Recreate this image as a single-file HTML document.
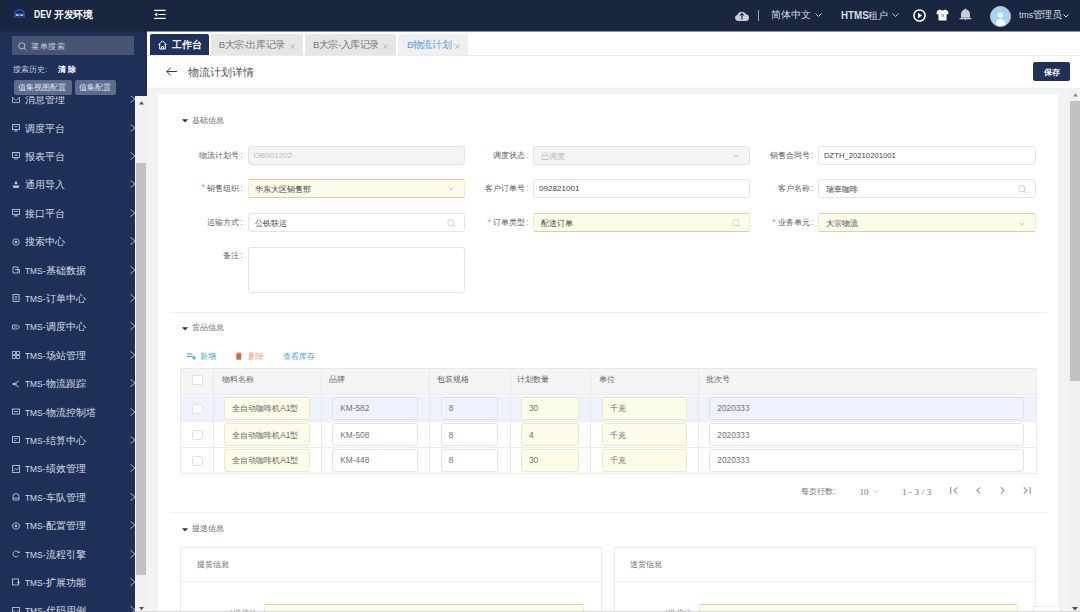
<!DOCTYPE html>
<html><head><meta charset="utf-8">
<style>
*{box-sizing:border-box;margin:0;padding:0}
html,body{width:1080px;height:612px;overflow:hidden;background:#f2f3f5;font-family:"Liberation Sans",sans-serif;color:#555;position:relative}
.a{position:absolute}
.t{position:absolute;white-space:nowrap;line-height:1}
svg{position:absolute;overflow:visible}
</style></head><body>

<div class="a" style="left:0px;top:0px;width:1080px;height:31px;background:#182640"></div>
<div class="a" style="left:0px;top:32px;width:147px;height:580px;background:#1e3058"></div>
<div class="a" style="left:147px;top:32px;width:933px;height:56px;background:#fff"></div>
<div class="a" style="left:147px;top:31px;width:933px;height:1px;background:#8d939e"></div>
<div class="a" style="left:0px;top:31px;width:147px;height:1px;background:#1b2b4c"></div>
<div class="a" style="left:147px;top:55px;width:933px;height:1px;background:#ececec"></div>
<div class="a" style="left:158px;top:94px;width:900px;height:518px;background:#fff"></div>
<div class="a" style="left:147px;top:87px;width:922px;height:1px;background:#f8f9fa"></div>
<svg style="left:13.5px;top:8.5px" width="11" height="9" viewBox="0 0 11 9"><path d="M1 8.8V4.8A4.5 4 0 0 1 10 4.8V8.8" fill="none" stroke="#2a4bb5" stroke-width="1.7"/><path d="M2 4.6H9" stroke="#2a4bb5" stroke-width="0.8"/><rect x="1.8" y="5.2" width="7.4" height="1.9" fill="#3d9fe0"/><circle cx="2.9" cy="6.1" r="0.8" fill="#e8eef5"/><circle cx="8.1" cy="6.3" r="0.8" fill="#e8eef5"/><path d="M3 8.3H8" stroke="#2a4bb5" stroke-width="1"/></svg>
<div class="t" style="left:34px;top:9.50px;font-size:10px;color:#fff;font-weight:bold;transform:scaleX(0.85);transform-origin:0 0">DEV</div>
<div class="t" style="left:54px;top:9.55px;font-size:9.5px;color:#fff;font-weight:bold;letter-spacing:-0.3px">开发环境</div>
<svg style="left:154px;top:9px" width="12" height="11" viewBox="0 0 12 11"><path d="M0.6 1.4H11.2M4.5 5.5H11.2M0.6 9.4H11.2" stroke="#fff" stroke-width="1.15" stroke-linecap="round"/><path d="M3.2 3.6L0.4 5.5L3.2 7.4Z" fill="#fff"/></svg>
<svg style="left:735px;top:10px" width="14.5" height="11" viewBox="0 0 14.5 11"><path d="M3 11A3 3 0 0 1 2.3 5.1A4.9 4.9 0 0 1 11.2 4.3A3.4 3.4 0 0 1 11.2 11Z" fill="#c9ccd2"/><path d="M6.9 9.5V3.6M5.1 5.5L6.9 3.4L8.7 5.5" stroke="#182640" stroke-width="1.1" fill="none"/></svg>
<div class="a" style="left:758px;top:10px;width:1px;height:11px;background:#9aa1ad"></div>
<div class="t" style="left:771px;top:10.00px;font-size:10px;color:#d9dde4;">简体中文</div>
<svg style="left:815px;top:13px" width="7" height="4" viewBox="0 0 7 4"><path d="M0.5 0.5L3.5 3.5L6.5 0.5" fill="none" stroke="#d9dde4" stroke-width="0.9"/></svg>
<div class="t" style="left:841px;top:10.25px;font-size:9.5px;color:#d9dde4;"><span style="display:inline-block;font-weight:bold;font-size:10.5px;transform:scaleX(0.93);transform-origin:0 50%;margin-right:-3px">HTMS</span>租户</div>
<svg style="left:892px;top:13px" width="7" height="4" viewBox="0 0 7 4"><path d="M0.5 0.5L3.5 3.5L6.5 0.5" fill="none" stroke="#d9dde4" stroke-width="0.9"/></svg>
<svg style="left:913px;top:9px" width="13" height="13" viewBox="0 0 13 13"><circle cx="6.5" cy="6.5" r="5.6" fill="none" stroke="#fff" stroke-width="1.5"/><path d="M5 3.8L9 6.5L5 9.2Z" fill="#fff"/></svg>
<svg style="left:936px;top:9px" width="13" height="12" viewBox="0 0 13 12"><path d="M4 0.5L1 2L0.5 5L2.5 5.5V11.5H10.5V5.5L12.5 5L12 2L9 0.5Q6.5 2.5 4 0.5Z" fill="#fff"/><rect x="5.5" y="5" width="1" height="3" fill="#f39c3d"/><rect x="6.8" y="5" width="1" height="3" fill="#3db0e0"/></svg>
<svg style="left:959px;top:8px" width="13" height="13" viewBox="0 0 13 13"><path d="M2 9.8V6.2A4.5 4.8 0 0 1 11 6.2V9.8Z" fill="#c9ccd2"/><rect x="0.5" y="10" width="12" height="1.3" rx="0.6" fill="#c9ccd2"/><path d="M5.5 11.3H7.5L6.5 12.6Z" fill="#c9ccd2"/><circle cx="6.5" cy="1.3" r="0.9" fill="#c9ccd2"/></svg>
<svg style="left:990px;top:6px" width="21" height="21" viewBox="0 0 21 21"><circle cx="10.5" cy="10.5" r="10" fill="#a6d2f6" stroke="#c4cad2" stroke-width="1"/><circle cx="10.5" cy="9" r="2.8" fill="#f4f8fc"/><path d="M5.5 18.5Q6 13 10.5 13Q15 13 15.5 18.5Q10.5 21 5.5 18.5Z" fill="#f4f8fc"/></svg>
<div class="t" style="left:1018.8px;top:10.45px;font-size:9.5px;color:#d9dde4;"><span style="display:inline-block;transform:scaleX(0.92);transform-origin:0 50%;margin-right:-1.2px">tms</span><span style="letter-spacing:-0.5px">管理员</span></div>
<svg style="left:1063px;top:14px" width="6" height="3.5" viewBox="0 0 6 3.5"><path d="M0.5 0.5L3.0 3.0L5.5 0.5" fill="none" stroke="#d9dde4" stroke-width="1"/></svg>
<div class="a" style="left:12px;top:36px;width:122px;height:19px;background:#475573"></div>
<svg style="left:18px;top:41.5px" width="9" height="9" viewBox="0 0 9 9"><circle cx="3.8" cy="3.8" r="3.1" fill="none" stroke="#c5cbd6" stroke-width="0.9"/><path d="M6 6L8.3 8.3" stroke="#c5cbd6" stroke-width="0.9"/></svg>
<div class="t" style="left:31.3px;top:42.50px;font-size:8.2px;color:#c5cbd6;letter-spacing:0.5px">菜单搜索</div>
<div class="t" style="left:13px;top:66.05px;font-size:7.9px;color:#c5cbd6;">搜索历史:</div>
<div class="t" style="left:57.5px;top:66.05px;font-size:7.9px;color:#fff;font-weight:bold">清 除</div>
<div class="a" style="left:13.5px;top:80px;width:58px;height:15px;background:#5c6c8b;border-radius:2px"></div>
<div class="t" style="left:18px;top:83.50px;font-size:8px;color:#e3e7ee;">值集视图配置</div>
<div class="a" style="left:74.5px;top:80px;width:41.5px;height:15px;background:#5c6c8b;border-radius:2px"></div>
<div class="t" style="left:79px;top:83.50px;font-size:8px;color:#e3e7ee;">值集配置</div>
<div class="a" style="left:0;top:96px;width:147px;height:516px;overflow:hidden">
<svg style="left:11.5px;top:-0.5px" width="8" height="8" viewBox="0 0 8 8"><path d="M0.5 1.5L4 4.5L7.5 1.5M0.5 1V6.5H7.5V1" fill="none" stroke="#bfc6d2" stroke-width="0.8"/></svg>
<div class="t" style="left:25.3px;top:-0.75px;font-size:9.5px;color:#d8dce3;">消息管理</div>
<svg style="left:130.3px;top:-0.8px" width="6" height="8" viewBox="0 0 6 8"><path d="M0.5 0.5L5.3 4L0.5 7.5" fill="none" stroke="#b5bcc8" stroke-width="0.9"/></svg>
<svg style="left:11.5px;top:27.9px" width="8" height="8" viewBox="0 0 8 8"><rect x="0.5" y="0.5" width="7" height="5" fill="none" stroke="#bfc6d2" stroke-width="0.9"/><path d="M4 5.5V7M2 7H6M2.5 2.5H5.5" stroke="#bfc6d2" stroke-width="0.8"/></svg>
<div class="t" style="left:25.3px;top:27.65px;font-size:9.5px;color:#d8dce3;">调度平台</div>
<svg style="left:130.3px;top:27.6px" width="6" height="8" viewBox="0 0 6 8"><path d="M0.5 0.5L5.3 4L0.5 7.5" fill="none" stroke="#b5bcc8" stroke-width="0.9"/></svg>
<svg style="left:11.5px;top:56.3px" width="8" height="8" viewBox="0 0 8 8"><rect x="0.5" y="0.5" width="7" height="5" fill="none" stroke="#bfc6d2" stroke-width="0.9"/><path d="M4 5.5V7M2 7H6M2.5 2H5.5M2.5 3.5H5.5" stroke="#bfc6d2" stroke-width="0.7"/></svg>
<div class="t" style="left:25.3px;top:56.05px;font-size:9.5px;color:#d8dce3;">报表平台</div>
<svg style="left:130.3px;top:56.0px" width="6" height="8" viewBox="0 0 6 8"><path d="M0.5 0.5L5.3 4L0.5 7.5" fill="none" stroke="#b5bcc8" stroke-width="0.9"/></svg>
<svg style="left:11.5px;top:84.7px" width="8" height="8" viewBox="0 0 8 8"><circle cx="4" cy="2" r="1.4" fill="#bfc6d2"/><path d="M0.5 4.5H7.5L6.5 7H1.5Z" fill="#bfc6d2"/></svg>
<div class="t" style="left:25.3px;top:84.45px;font-size:9.5px;color:#d8dce3;">通用导入</div>
<svg style="left:130.3px;top:84.4px" width="6" height="8" viewBox="0 0 6 8"><path d="M0.5 0.5L5.3 4L0.5 7.5" fill="none" stroke="#b5bcc8" stroke-width="0.9"/></svg>
<svg style="left:11.5px;top:113.1px" width="8" height="8" viewBox="0 0 8 8"><rect x="0.5" y="0.5" width="7" height="5" fill="none" stroke="#bfc6d2" stroke-width="0.9"/><path d="M4 5.5V7M2 7H6M2 2.5H6" stroke="#bfc6d2" stroke-width="0.8"/></svg>
<div class="t" style="left:25.3px;top:112.85px;font-size:9.5px;color:#d8dce3;">接口平台</div>
<svg style="left:130.3px;top:112.8px" width="6" height="8" viewBox="0 0 6 8"><path d="M0.5 0.5L5.3 4L0.5 7.5" fill="none" stroke="#b5bcc8" stroke-width="0.9"/></svg>
<svg style="left:11.5px;top:141.5px" width="8" height="8" viewBox="0 0 8 8"><circle cx="4" cy="4" r="3.2" fill="none" stroke="#bfc6d2" stroke-width="0.9"/><circle cx="4" cy="4" r="1.3" fill="#bfc6d2"/></svg>
<div class="t" style="left:25.3px;top:141.25px;font-size:9.5px;color:#d8dce3;">搜索中心</div>
<svg style="left:130.3px;top:141.2px" width="6" height="8" viewBox="0 0 6 8"><path d="M0.5 0.5L5.3 4L0.5 7.5" fill="none" stroke="#b5bcc8" stroke-width="0.9"/></svg>
<svg style="left:11.5px;top:169.9px" width="8" height="8" viewBox="0 0 8 8"><path d="M1 1H6V7H1Z" fill="none" stroke="#bfc6d2" stroke-width="0.9"/><path d="M3 3.5H7.5V7.5" fill="none" stroke="#bfc6d2" stroke-width="0.8"/></svg>
<div class="t" style="left:25.3px;top:169.65px;font-size:9.5px;color:#d8dce3;"><span style="display:inline-block;transform:scaleX(0.88);transform-origin:0 50%;margin-right:-2.8px">TMS-</span>基础数据</div>
<svg style="left:130.3px;top:169.6px" width="6" height="8" viewBox="0 0 6 8"><path d="M0.5 0.5L5.3 4L0.5 7.5" fill="none" stroke="#b5bcc8" stroke-width="0.9"/></svg>
<svg style="left:11.5px;top:198.3px" width="8" height="8" viewBox="0 0 8 8"><rect x="1" y="0.5" width="6" height="7" fill="none" stroke="#bfc6d2" stroke-width="0.9"/><path d="M2.5 2.5H5.5M2.5 4H5.5M2.5 5.5H5" stroke="#bfc6d2" stroke-width="0.7"/></svg>
<div class="t" style="left:25.3px;top:198.05px;font-size:9.5px;color:#d8dce3;"><span style="display:inline-block;transform:scaleX(0.88);transform-origin:0 50%;margin-right:-2.8px">TMS-</span>订单中心</div>
<svg style="left:130.3px;top:198.0px" width="6" height="8" viewBox="0 0 6 8"><path d="M0.5 0.5L5.3 4L0.5 7.5" fill="none" stroke="#b5bcc8" stroke-width="0.9"/></svg>
<svg style="left:11.5px;top:226.7px" width="8" height="8" viewBox="0 0 8 8"><path d="M0.5 2H5.5L7.5 4L5.5 6H0.5Z" fill="none" stroke="#bfc6d2" stroke-width="0.9"/><path d="M2 4H5" stroke="#bfc6d2" stroke-width="0.8"/></svg>
<div class="t" style="left:25.3px;top:226.45px;font-size:9.5px;color:#d8dce3;"><span style="display:inline-block;transform:scaleX(0.88);transform-origin:0 50%;margin-right:-2.8px">TMS-</span>调度中心</div>
<svg style="left:130.3px;top:226.4px" width="6" height="8" viewBox="0 0 6 8"><path d="M0.5 0.5L5.3 4L0.5 7.5" fill="none" stroke="#b5bcc8" stroke-width="0.9"/></svg>
<svg style="left:11.5px;top:255.1px" width="8" height="8" viewBox="0 0 8 8"><rect x="0.5" y="0.5" width="3" height="3" fill="none" stroke="#bfc6d2" stroke-width="0.8"/><rect x="4.5" y="0.5" width="3" height="3" fill="none" stroke="#bfc6d2" stroke-width="0.8"/><rect x="0.5" y="4.5" width="3" height="3" fill="none" stroke="#bfc6d2" stroke-width="0.8"/><rect x="4.5" y="4.5" width="3" height="3" fill="none" stroke="#bfc6d2" stroke-width="0.8"/></svg>
<div class="t" style="left:25.3px;top:254.85px;font-size:9.5px;color:#d8dce3;"><span style="display:inline-block;transform:scaleX(0.88);transform-origin:0 50%;margin-right:-2.8px">TMS-</span>场站管理</div>
<svg style="left:130.3px;top:254.8px" width="6" height="8" viewBox="0 0 6 8"><path d="M0.5 0.5L5.3 4L0.5 7.5" fill="none" stroke="#b5bcc8" stroke-width="0.9"/></svg>
<svg style="left:11.5px;top:283.5px" width="8" height="8" viewBox="0 0 8 8"><path d="M7 1L1.5 4L7 7M1.5 4H5" fill="none" stroke="#bfc6d2" stroke-width="0.9"/><circle cx="1.5" cy="4" r="1" fill="#bfc6d2"/></svg>
<div class="t" style="left:25.3px;top:283.25px;font-size:9.5px;color:#d8dce3;"><span style="display:inline-block;transform:scaleX(0.88);transform-origin:0 50%;margin-right:-2.8px">TMS-</span>物流跟踪</div>
<svg style="left:130.3px;top:283.2px" width="6" height="8" viewBox="0 0 6 8"><path d="M0.5 0.5L5.3 4L0.5 7.5" fill="none" stroke="#b5bcc8" stroke-width="0.9"/></svg>
<svg style="left:11.5px;top:311.9px" width="8" height="8" viewBox="0 0 8 8"><rect x="0.5" y="1" width="7" height="5" fill="none" stroke="#bfc6d2" stroke-width="0.9"/><path d="M2 3.5H6" stroke="#bfc6d2" stroke-width="0.8"/></svg>
<div class="t" style="left:25.3px;top:311.65px;font-size:9.5px;color:#d8dce3;"><span style="display:inline-block;transform:scaleX(0.88);transform-origin:0 50%;margin-right:-2.8px">TMS-</span>物流控制塔</div>
<svg style="left:130.3px;top:311.6px" width="6" height="8" viewBox="0 0 6 8"><path d="M0.5 0.5L5.3 4L0.5 7.5" fill="none" stroke="#b5bcc8" stroke-width="0.9"/></svg>
<svg style="left:11.5px;top:340.3px" width="8" height="8" viewBox="0 0 8 8"><rect x="0.5" y="0.5" width="7" height="6" fill="none" stroke="#bfc6d2" stroke-width="0.9"/><path d="M2 2.5H6M2 4.5H4" stroke="#bfc6d2" stroke-width="0.7"/></svg>
<div class="t" style="left:25.3px;top:340.05px;font-size:9.5px;color:#d8dce3;"><span style="display:inline-block;transform:scaleX(0.88);transform-origin:0 50%;margin-right:-2.8px">TMS-</span>结算中心</div>
<svg style="left:130.3px;top:340.0px" width="6" height="8" viewBox="0 0 6 8"><path d="M0.5 0.5L5.3 4L0.5 7.5" fill="none" stroke="#b5bcc8" stroke-width="0.9"/></svg>
<svg style="left:11.5px;top:368.7px" width="8" height="8" viewBox="0 0 8 8"><rect x="0.5" y="0.5" width="7" height="7" fill="none" stroke="#bfc6d2" stroke-width="0.9"/><path d="M1.5 6L3.5 3.5L5 5L6.5 2.5" fill="none" stroke="#bfc6d2" stroke-width="0.7"/></svg>
<div class="t" style="left:25.3px;top:368.45px;font-size:9.5px;color:#d8dce3;"><span style="display:inline-block;transform:scaleX(0.88);transform-origin:0 50%;margin-right:-2.8px">TMS-</span>绩效管理</div>
<svg style="left:130.3px;top:368.4px" width="6" height="8" viewBox="0 0 6 8"><path d="M0.5 0.5L5.3 4L0.5 7.5" fill="none" stroke="#b5bcc8" stroke-width="0.9"/></svg>
<svg style="left:11.5px;top:397.1px" width="8" height="8" viewBox="0 0 8 8"><path d="M1 7V3.5A3 3 0 0 1 7 3.5V7Z" fill="none" stroke="#bfc6d2" stroke-width="0.9"/><path d="M1 5H7" stroke="#bfc6d2" stroke-width="0.8"/></svg>
<div class="t" style="left:25.3px;top:396.85px;font-size:9.5px;color:#d8dce3;"><span style="display:inline-block;transform:scaleX(0.88);transform-origin:0 50%;margin-right:-2.8px">TMS-</span>车队管理</div>
<svg style="left:130.3px;top:396.8px" width="6" height="8" viewBox="0 0 6 8"><path d="M0.5 0.5L5.3 4L0.5 7.5" fill="none" stroke="#b5bcc8" stroke-width="0.9"/></svg>
<svg style="left:11.5px;top:425.5px" width="8" height="8" viewBox="0 0 8 8"><path d="M4 0.5L7.2 2.3V5.7L4 7.5L0.8 5.7V2.3Z" fill="none" stroke="#bfc6d2" stroke-width="0.9"/><circle cx="4" cy="4" r="1.2" fill="#bfc6d2"/></svg>
<div class="t" style="left:25.3px;top:425.25px;font-size:9.5px;color:#d8dce3;"><span style="display:inline-block;transform:scaleX(0.88);transform-origin:0 50%;margin-right:-2.8px">TMS-</span>配置管理</div>
<svg style="left:130.3px;top:425.2px" width="6" height="8" viewBox="0 0 6 8"><path d="M0.5 0.5L5.3 4L0.5 7.5" fill="none" stroke="#b5bcc8" stroke-width="0.9"/></svg>
<svg style="left:11.5px;top:453.9px" width="8" height="8" viewBox="0 0 8 8"><path d="M6.8 3A3 3 0 1 0 6.5 5.5" fill="none" stroke="#bfc6d2" stroke-width="0.9"/><path d="M5.5 2.5L7.2 3L7.2 1.2" fill="none" stroke="#bfc6d2" stroke-width="0.8"/></svg>
<div class="t" style="left:25.3px;top:453.65px;font-size:9.5px;color:#d8dce3;"><span style="display:inline-block;transform:scaleX(0.88);transform-origin:0 50%;margin-right:-2.8px">TMS-</span>流程引擎</div>
<svg style="left:130.3px;top:453.6px" width="6" height="8" viewBox="0 0 6 8"><path d="M0.5 0.5L5.3 4L0.5 7.5" fill="none" stroke="#b5bcc8" stroke-width="0.9"/></svg>
<svg style="left:11.5px;top:482.3px" width="8" height="8" viewBox="0 0 8 8"><rect x="0.5" y="1" width="6" height="6" fill="none" stroke="#bfc6d2" stroke-width="0.9"/><path d="M5 4.5H8M6.5 3V6" stroke="#bfc6d2" stroke-width="0.8"/></svg>
<div class="t" style="left:25.3px;top:482.05px;font-size:9.5px;color:#d8dce3;"><span style="display:inline-block;transform:scaleX(0.88);transform-origin:0 50%;margin-right:-2.8px">TMS-</span>扩展功能</div>
<svg style="left:130.3px;top:482.0px" width="6" height="8" viewBox="0 0 6 8"><path d="M0.5 0.5L5.3 4L0.5 7.5" fill="none" stroke="#b5bcc8" stroke-width="0.9"/></svg>
<svg style="left:11.5px;top:510.7px" width="8" height="8" viewBox="0 0 8 8"><rect x="0.5" y="0.5" width="7" height="7" fill="none" stroke="#bfc6d2" stroke-width="0.9"/><path d="M2.5 3L1.5 4L2.5 5M5.5 3L6.5 4L5.5 5" fill="none" stroke="#bfc6d2" stroke-width="0.7"/></svg>
<div class="t" style="left:25.3px;top:510.45px;font-size:9.5px;color:#d8dce3;"><span style="display:inline-block;transform:scaleX(0.88);transform-origin:0 50%;margin-right:-2.8px">TMS-</span>代码用例</div>
<svg style="left:130.3px;top:510.4px" width="6" height="8" viewBox="0 0 6 8"><path d="M0.5 0.5L5.3 4L0.5 7.5" fill="none" stroke="#b5bcc8" stroke-width="0.9"/></svg>
</div>
<div class="a" style="left:135px;top:96px;width:12px;height:516px;background:#f1f1f1;border-left:1px solid #fafafa"></div>
<div class="a" style="left:136px;top:163px;width:10px;height:412px;background:#c1c1c1"></div>
<svg style="left:138.5px;top:100.5px" width="5" height="3.5" viewBox="0 0 5 3.5"><path d="M0 3.5L2.5 0.3L5 3.5Z" fill="#555"/></svg>
<svg style="left:138.5px;top:606.5px" width="5" height="3.5" viewBox="0 0 5 3.5"><path d="M0 0L2.5 3.2L5 0Z" fill="#555"/></svg>
<div class="a" style="left:150px;top:34px;width:59px;height:21px;background:#1f3159;border-radius:2px 2px 0 0"></div>
<svg style="left:158px;top:40.2px" width="9" height="9.5" viewBox="0 0 9 9.5"><path d="M0.5 4.8L4.5 0.8L8.5 4.8M1.7 3.8V9H7.3V3.8M3.6 9V6.6H5.4V9" fill="none" stroke="#fff" stroke-width="1"/></svg>
<div class="t" style="left:172px;top:40.25px;font-size:9.5px;color:#fff;font-weight:bold">工作台</div>
<div class="a" style="left:211px;top:34px;width:92px;height:21px;background:#e6e6e6;border-radius:2px 2px 0 0"></div>
<div class="t" style="left:218.8px;top:40.25px;font-size:9.5px;color:#777;letter-spacing:-0.45px">B大宗-出库记录</div>
<svg style="left:290.2px;top:43.5px" width="5" height="5" viewBox="0 0 5 5"><path d="M0.5 0.5L4.5 4.5M4.5 0.5L0.5 4.5" stroke="#a0a0a0" stroke-width="0.8"/></svg>
<div class="a" style="left:304.5px;top:34px;width:91.5px;height:21px;background:#e6e6e6;border-radius:2px 2px 0 0"></div>
<div class="t" style="left:313.0px;top:40.25px;font-size:9.5px;color:#777;letter-spacing:-0.45px">B大宗-入库记录</div>
<svg style="left:383.2px;top:43.5px" width="5" height="5" viewBox="0 0 5 5"><path d="M0.5 0.5L4.5 4.5M4.5 0.5L0.5 4.5" stroke="#a0a0a0" stroke-width="0.8"/></svg>
<div class="a" style="left:398px;top:34px;width:70px;height:21px;background:#f0f0f0;border-radius:2px 2px 0 0"></div>
<div class="t" style="left:407px;top:40.25px;font-size:9.5px;color:#4ea5dc;letter-spacing:-0.45px">B物流计划</div>
<svg style="left:455.2px;top:43.5px" width="5" height="5" viewBox="0 0 5 5"><path d="M0.5 0.5L4.5 4.5M4.5 0.5L0.5 4.5" stroke="#a0a0a0" stroke-width="0.8"/></svg>
<svg style="left:165.5px;top:67px" width="11" height="9" viewBox="0 0 11 9"><path d="M11 4.5H0.8M4.8 0.5L0.8 4.5L4.8 8.5" fill="none" stroke="#2d3e63" stroke-width="1"/></svg>
<div class="t" style="left:188px;top:66.50px;font-size:11px;color:#555;">物流计划详情</div>
<div class="a" style="left:1033px;top:62px;width:37px;height:19px;background:#1f3159;border-radius:2px"></div>
<div class="t" style="left:1043.5px;top:67.80px;font-size:8.4px;color:#fff;font-weight:bold">保存</div>
<div class="a" style="left:1069px;top:88px;width:11px;height:524px;background:#f1f1f1"></div>
<div class="a" style="left:1070px;top:101px;width:10px;height:280px;background:#c1c1c1"></div>
<svg style="left:1072.5px;top:93px" width="5" height="3.5" viewBox="0 0 5 3.5"><path d="M0 3.5L2.5 0.3L5 3.5Z" fill="#8a8a8a"/></svg>
<svg style="left:1072px;top:607px" width="6" height="4" viewBox="0 0 6 4"><path d="M0 0L3 3.5L6 0Z" fill="#505050"/></svg>
<svg style="left:181.5px;top:119px" width="6" height="4" viewBox="0 0 6 4"><path d="M0 0.3H6L3 3.5Z" fill="#333"/></svg>
<div class="t" style="left:192px;top:116.50px;font-size:8px;color:#666;">基础信息</div>
<div class="a" style="left:247.5px;top:146px;width:217.0px;height:18.5px;background:#f4f4f4;border:1px solid #e3e3e3;border-radius:3px"></div>
<div class="t" style="right:841px;top:152.15px;font-size:8.2px;color:#5e5e5e;">物流计划号</div>
<div class="t" style="left:240.4px;top:152.15px;font-size:8.2px;color:#888;">:</div>
<div class="t" style="left:253.5px;top:151.70px;font-size:8.1px;color:#bbb;">OB001202</div>
<div class="a" style="left:533px;top:146px;width:216.5px;height:18.5px;background:#f4f4f4;border:1px solid #e3e3e3;border-radius:3px"></div>
<div class="t" style="right:555px;top:152.15px;font-size:8.2px;color:#5e5e5e;">调度状态</div>
<div class="t" style="left:526.4px;top:152.15px;font-size:8.2px;color:#888;">:</div>
<div class="t" style="left:540.5px;top:151.60px;font-size:8.3px;color:#bbb;">已调度</div>
<svg style="left:733.0px;top:154.25px" width="6" height="3.6" viewBox="0 0 6 3.6"><path d="M0.5 0.5L3.0 3.1L5.5 0.5" fill="none" stroke="#bbb" stroke-width="0.9"/></svg>
<div class="a" style="left:818px;top:146px;width:217.5px;height:18.5px;background:#fff;border:1px solid #e3e3e3;border-radius:3px"></div>
<div class="t" style="right:270.5px;top:152.15px;font-size:8.2px;color:#5e5e5e;">销售合同号</div>
<div class="t" style="left:810.9px;top:152.15px;font-size:8.2px;color:#888;">:</div>
<div class="t" style="left:824px;top:151.90px;font-size:7.7px;color:#444;">DZTH_20210201001</div>
<div class="a" style="left:247.5px;top:179.1px;width:217.0px;height:18.599999999999994px;background:#fcfde8;border:1px solid #f1ecc8;border-top-color:#efc6a0;border-bottom-color:#efc6a0;border-radius:2px"></div>
<div class="t" style="right:841px;top:185.30px;font-size:8.2px;color:#5e5e5e;">销售组织</div>
<div class="t" style="left:240.4px;top:185.30px;font-size:8.2px;color:#888;">:</div>
<div class="t" style="left:201.5px;top:182.45px;font-size:9.5px;color:#e8866a;">*</div>
<div class="t" style="left:255.0px;top:184.75px;font-size:8.3px;color:#444;">华东大区销售部</div>
<svg style="left:448.0px;top:187.39999999999998px" width="6" height="3.6" viewBox="0 0 6 3.6"><path d="M0.5 0.5L3.0 3.1L5.5 0.5" fill="none" stroke="#bbb" stroke-width="0.9"/></svg>
<div class="a" style="left:533px;top:179.1px;width:216.5px;height:18.599999999999994px;background:#fff;border:1px solid #e3e3e3;border-radius:3px"></div>
<div class="t" style="right:555px;top:185.30px;font-size:8.2px;color:#5e5e5e;">客户订单号</div>
<div class="t" style="left:526.4px;top:185.30px;font-size:8.2px;color:#888;">:</div>
<div class="t" style="left:539px;top:184.85px;font-size:8.1px;color:#444;">092821001</div>
<div class="a" style="left:818px;top:179.1px;width:217.5px;height:18.599999999999994px;background:#fff;border:1px solid #e3e3e3;border-radius:3px"></div>
<div class="t" style="right:270.5px;top:185.30px;font-size:8.2px;color:#5e5e5e;">客户名称</div>
<div class="t" style="left:810.9px;top:185.30px;font-size:8.2px;color:#888;">:</div>
<div class="t" style="left:825.5px;top:184.75px;font-size:8.3px;color:#444;">瑞幸咖啡</div>
<svg style="left:1017.5px;top:184.89999999999998px" width="9" height="9" viewBox="0 0 9 9"><circle cx="3.8" cy="3.8" r="3.1" fill="none" stroke="#c8c8c8" stroke-width="0.9"/><path d="M6 6L8.3 8.3" stroke="#c8c8c8" stroke-width="0.9"/></svg>
<div class="a" style="left:247.5px;top:213.3px;width:217.0px;height:18.399999999999977px;background:#fff;border:1px solid #e3e3e3;border-radius:3px"></div>
<div class="t" style="right:841px;top:219.40px;font-size:8.2px;color:#5e5e5e;">运输方式</div>
<div class="t" style="left:240.4px;top:219.40px;font-size:8.2px;color:#888;">:</div>
<div class="t" style="left:255.0px;top:218.85px;font-size:8.3px;color:#444;">公铁联运</div>
<svg style="left:446.5px;top:219.0px" width="9" height="9" viewBox="0 0 9 9"><circle cx="3.8" cy="3.8" r="3.1" fill="none" stroke="#c8c8c8" stroke-width="0.9"/><path d="M6 6L8.3 8.3" stroke="#c8c8c8" stroke-width="0.9"/></svg>
<div class="a" style="left:533px;top:213.3px;width:216.5px;height:18.399999999999977px;background:#fcfde8;border:1px solid #f1ecc8;border-top-color:#efc6a0;border-bottom-color:#efc6a0;border-radius:2px"></div>
<div class="t" style="right:555px;top:219.40px;font-size:8.2px;color:#5e5e5e;">订单类型</div>
<div class="t" style="left:526.4px;top:219.40px;font-size:8.2px;color:#888;">:</div>
<div class="t" style="left:487.5px;top:216.55px;font-size:9.5px;color:#e8866a;">*</div>
<div class="t" style="left:540.5px;top:218.85px;font-size:8.3px;color:#444;">配送订单</div>
<svg style="left:731.5px;top:219.0px" width="9" height="9" viewBox="0 0 9 9"><circle cx="3.8" cy="3.8" r="3.1" fill="none" stroke="#c8c8c8" stroke-width="0.9"/><path d="M6 6L8.3 8.3" stroke="#c8c8c8" stroke-width="0.9"/></svg>
<div class="a" style="left:818px;top:213.3px;width:217.5px;height:18.399999999999977px;background:#fcfde8;border:1px solid #f1ecc8;border-top-color:#efc6a0;border-bottom-color:#efc6a0;border-radius:2px"></div>
<div class="t" style="right:270.5px;top:219.40px;font-size:8.2px;color:#5e5e5e;">业务单元</div>
<div class="t" style="left:810.9px;top:219.40px;font-size:8.2px;color:#888;">:</div>
<div class="t" style="left:772.0px;top:216.55px;font-size:9.5px;color:#e8866a;">*</div>
<div class="t" style="left:825.5px;top:218.85px;font-size:8.3px;color:#444;">大宗物流</div>
<svg style="left:1019.0px;top:221.5px" width="6" height="3.6" viewBox="0 0 6 3.6"><path d="M0.5 0.5L3.0 3.1L5.5 0.5" fill="none" stroke="#bbb" stroke-width="0.9"/></svg>
<div class="a" style="left:248px;top:246.5px;width:216.5px;height:46.69999999999999px;background:#fff;border:1px solid #e3e3e3;border-radius:3px"></div>
<div class="t" style="right:841px;top:251.90px;font-size:8.2px;color:#666;">备注</div>
<div class="t" style="left:240.4px;top:251.90px;font-size:8.2px;color:#666;">:</div>
<div class="a" style="left:170px;top:311.5px;width:877px;height:1px;background:#efefef"></div>
<svg style="left:181.5px;top:326.5px" width="6" height="4" viewBox="0 0 6 4"><path d="M0 0.3H6L3 3.5Z" fill="#333"/></svg>
<div class="t" style="left:192px;top:324.00px;font-size:8px;color:#666;">货品信息</div>
<svg style="left:187px;top:352.5px" width="9" height="7" viewBox="0 0 9 7"><path d="M0 1H5.5M0 3.5H5.5M7 2.5V7M4.8 4.8H9" stroke="#3a9fd8" stroke-width="1"/></svg>
<div class="t" style="left:199.5px;top:352.50px;font-size:8px;color:#3a9fd8;">新增</div>
<svg style="left:236.3px;top:351.5px" width="5.5" height="8" viewBox="0 0 5.5 8"><path d="M0.3 1.6Q0.3 0.4 2.75 0.4Q5.2 0.4 5.2 1.6V7.8H0.3Z" fill="#d9653b"/><path d="M0.3 1.6H5.2" stroke="#f3c2a8" stroke-width="0.4"/></svg>
<div class="t" style="left:247.5px;top:352.50px;font-size:8px;color:#e2aa7c;">删除</div>
<div class="t" style="left:283px;top:352.50px;font-size:8px;color:#3a9fd8;">查看库存</div>
<div class="a" style="left:180px;top:368.3px;width:856.5px;height:27.19999999999999px;background:#f5f5f5;border:1px solid #e9e9e9"></div>
<div class="a" style="left:180px;top:395.5px;width:856.5px;height:26.19999999999999px;background:#eef2fd"></div>
<div class="a" style="left:180px;top:421.2px;width:856.5px;height:1px;background:#ececec"></div>
<div class="a" style="left:180px;top:447.2px;width:856.5px;height:1px;background:#ececec"></div>
<div class="a" style="left:180px;top:472.8px;width:856.5px;height:1px;background:#ececec"></div>
<div class="a" style="left:180px;top:368.3px;width:1px;height:105.0px;background:#e9e9e9"></div>
<div class="a" style="left:1035.5px;top:368.3px;width:1px;height:105.0px;background:#e9e9e9"></div>
<div class="a" style="left:213.3px;top:368.3px;width:1px;height:105.0px;background:#e9e9e9"></div>
<div class="a" style="left:321px;top:368.3px;width:1px;height:105.0px;background:#e9e9e9"></div>
<div class="a" style="left:429.3px;top:368.3px;width:1px;height:105.0px;background:#e9e9e9"></div>
<div class="a" style="left:510px;top:368.3px;width:1px;height:105.0px;background:#e9e9e9"></div>
<div class="a" style="left:590px;top:368.3px;width:1px;height:105.0px;background:#e9e9e9"></div>
<div class="a" style="left:698.3px;top:368.3px;width:1px;height:105.0px;background:#e9e9e9"></div>
<div class="t" style="left:221.5px;top:375.90px;font-size:8px;color:#666;">物料名称</div>
<div class="t" style="left:329px;top:375.90px;font-size:8px;color:#666;">品牌</div>
<div class="t" style="left:436.5px;top:375.90px;font-size:8px;color:#666;">包装规格</div>
<div class="t" style="left:517.3px;top:375.90px;font-size:8px;color:#666;">计划数量</div>
<div class="t" style="left:599px;top:375.90px;font-size:8px;color:#666;">单位</div>
<div class="t" style="left:706px;top:375.90px;font-size:8px;color:#666;">批次号</div>
<div class="a" style="left:191.5px;top:374.7px;width:11px;height:10px;background:#fff;border:1px solid #e0e0e0;border-radius:1.5px"></div>
<div class="a" style="left:191.5px;top:404.1px;width:11px;height:10px;background:#fff;border:1px solid #e0e0e0;border-radius:1.5px"></div>
<div class="a" style="left:224.3px;top:396.5px;width:85.69999999999999px;height:23.69999999999999px;background:#fcfde8;border:1px solid #ebe6cc;border-radius:3px"></div>
<div class="t" style="left:232.3px;top:404.45px;font-size:8.3px;color:#666;">全自动咖啡机A1型</div>
<div class="a" style="left:332.3px;top:396.5px;width:85.39999999999998px;height:23.69999999999999px;background:#eef2fd;border:1px solid #e3e3e3;border-radius:3px"></div>
<div class="t" style="left:340.3px;top:404.45px;font-size:8.3px;color:#727272;">KM-582</div>
<div class="a" style="left:440.7px;top:396.5px;width:57.60000000000002px;height:23.69999999999999px;background:#eef2fd;border:1px solid #e3e3e3;border-radius:3px"></div>
<div class="t" style="left:448.7px;top:404.45px;font-size:8.3px;color:#727272;">8</div>
<div class="a" style="left:521px;top:396.5px;width:58.299999999999955px;height:23.69999999999999px;background:#fcfde8;border:1px solid #ebe6cc;border-radius:3px"></div>
<div class="t" style="left:529px;top:404.45px;font-size:8.3px;color:#727272;">30</div>
<div class="a" style="left:601.7px;top:396.5px;width:85.59999999999991px;height:23.69999999999999px;background:#fcfde8;border:1px solid #ebe6cc;border-radius:3px"></div>
<div class="t" style="left:609.7px;top:404.45px;font-size:8.3px;color:#666;">千克</div>
<div class="a" style="left:709.3px;top:396.5px;width:315.0px;height:23.69999999999999px;background:#eef2fd;border:1px solid #e3e3e3;border-radius:3px"></div>
<div class="t" style="left:717.3px;top:404.45px;font-size:8.3px;color:#727272;">2020333</div>
<div class="a" style="left:191.5px;top:430.2px;width:11px;height:10px;background:#fff;border:1px solid #e0e0e0;border-radius:1.5px"></div>
<div class="a" style="left:224.3px;top:422.7px;width:85.69999999999999px;height:23.5px;background:#fcfde8;border:1px solid #ebe6cc;border-radius:3px"></div>
<div class="t" style="left:232.3px;top:430.55px;font-size:8.3px;color:#666;">全自动咖啡机A1型</div>
<div class="a" style="left:332.3px;top:422.7px;width:85.39999999999998px;height:23.5px;background:#fff;border:1px solid #e3e3e3;border-radius:3px"></div>
<div class="t" style="left:340.3px;top:430.55px;font-size:8.3px;color:#727272;">KM-508</div>
<div class="a" style="left:440.7px;top:422.7px;width:57.60000000000002px;height:23.5px;background:#fff;border:1px solid #e3e3e3;border-radius:3px"></div>
<div class="t" style="left:448.7px;top:430.55px;font-size:8.3px;color:#727272;">8</div>
<div class="a" style="left:521px;top:422.7px;width:58.299999999999955px;height:23.5px;background:#fcfde8;border:1px solid #ebe6cc;border-radius:3px"></div>
<div class="t" style="left:529px;top:430.55px;font-size:8.3px;color:#727272;">4</div>
<div class="a" style="left:601.7px;top:422.7px;width:85.59999999999991px;height:23.5px;background:#fcfde8;border:1px solid #ebe6cc;border-radius:3px"></div>
<div class="t" style="left:609.7px;top:430.55px;font-size:8.3px;color:#666;">千克</div>
<div class="a" style="left:709.3px;top:422.7px;width:315.0px;height:23.5px;background:#fff;border:1px solid #e3e3e3;border-radius:3px"></div>
<div class="t" style="left:717.3px;top:430.55px;font-size:8.3px;color:#727272;">2020333</div>
<div class="a" style="left:191.5px;top:456.0px;width:11px;height:10px;background:#fff;border:1px solid #e0e0e0;border-radius:1.5px"></div>
<div class="a" style="left:224.3px;top:448.7px;width:85.69999999999999px;height:23.100000000000023px;background:#fcfde8;border:1px solid #ebe6cc;border-radius:3px"></div>
<div class="t" style="left:232.3px;top:456.35px;font-size:8.3px;color:#666;">全自动咖啡机A1型</div>
<div class="a" style="left:332.3px;top:448.7px;width:85.39999999999998px;height:23.100000000000023px;background:#fff;border:1px solid #e3e3e3;border-radius:3px"></div>
<div class="t" style="left:340.3px;top:456.35px;font-size:8.3px;color:#727272;">KM-448</div>
<div class="a" style="left:440.7px;top:448.7px;width:57.60000000000002px;height:23.100000000000023px;background:#fff;border:1px solid #e3e3e3;border-radius:3px"></div>
<div class="t" style="left:448.7px;top:456.35px;font-size:8.3px;color:#727272;">8</div>
<div class="a" style="left:521px;top:448.7px;width:58.299999999999955px;height:23.100000000000023px;background:#fcfde8;border:1px solid #ebe6cc;border-radius:3px"></div>
<div class="t" style="left:529px;top:456.35px;font-size:8.3px;color:#727272;">30</div>
<div class="a" style="left:601.7px;top:448.7px;width:85.59999999999991px;height:23.100000000000023px;background:#fcfde8;border:1px solid #ebe6cc;border-radius:3px"></div>
<div class="t" style="left:609.7px;top:456.35px;font-size:8.3px;color:#666;">千克</div>
<div class="a" style="left:709.3px;top:448.7px;width:315.0px;height:23.100000000000023px;background:#fff;border:1px solid #e3e3e3;border-radius:3px"></div>
<div class="t" style="left:717.3px;top:456.35px;font-size:8.3px;color:#727272;">2020333</div>
<div class="t" style="left:801px;top:487.70px;font-size:8.2px;color:#777;">每页行数:</div>
<div class="t" style="left:859.5px;top:487.80px;font-size:9px;color:#777;font-family:'Liberation Serif',serif">10</div>
<svg style="left:873px;top:490.3px" width="6" height="3" viewBox="0 0 6 3"><path d="M0.5 0.5L3.0 2.5L5.5 0.5" fill="none" stroke="#bbb" stroke-width="0.8"/></svg>
<div class="t" style="left:902px;top:487.80px;font-size:9px;color:#777;font-family:'Liberation Serif',serif;letter-spacing:0.15px">1 - 3 / 3</div>
<svg style="left:950px;top:486.7px" width="8" height="7" viewBox="0 0 8 7"><path d="M0.7 0V7M7.2 0.4L4 3.5L7.2 6.6" fill="none" stroke="#9c9c9c" stroke-width="1.2"/></svg>
<svg style="left:976px;top:486.7px" width="5" height="7" viewBox="0 0 5 7"><path d="M4 0.4L0.9 3.5L4 6.6" fill="none" stroke="#9c9c9c" stroke-width="1.2"/></svg>
<svg style="left:1000px;top:486.7px" width="5" height="7" viewBox="0 0 5 7"><path d="M1 0.4L4.1 3.5L1 6.6" fill="none" stroke="#9c9c9c" stroke-width="1.2"/></svg>
<svg style="left:1022.8px;top:486.7px" width="8" height="7" viewBox="0 0 8 7"><path d="M0.8 0.4L4 3.5L0.8 6.6M7.3 0V7" fill="none" stroke="#9c9c9c" stroke-width="1.2"/></svg>
<div class="a" style="left:170px;top:512px;width:877px;height:1px;background:#eeeeee"></div>
<svg style="left:181.5px;top:527.5px" width="6" height="4" viewBox="0 0 6 4"><path d="M0 0.3H6L3 3.5Z" fill="#333"/></svg>
<div class="t" style="left:192px;top:525.00px;font-size:8px;color:#666;">提送信息</div>
<div class="a" style="left:180.4px;top:547px;width:421.6px;height:80px;background:#fff;border:1px solid #ececec"></div>
<div class="a" style="left:180.4px;top:581px;width:421.6px;height:1px;background:#ececec"></div>
<div class="t" style="left:197px;top:561.00px;font-size:8px;color:#666;">提货信息</div>
<div class="a" style="left:614.2px;top:547px;width:422.2px;height:80px;background:#fff;border:1px solid #ececec"></div>
<div class="a" style="left:614.2px;top:581px;width:422.2px;height:1px;background:#ececec"></div>
<div class="t" style="left:630px;top:561.00px;font-size:8px;color:#666;">送货信息</div>
<div class="a" style="left:264.3px;top:604.4px;width:319.7px;height:19.600000000000023px;background:#fcfde8;border:1px solid #f1ecc8;border-top-color:#efc6a0;border-bottom-color:#efc6a0;border-radius:2px"></div>
<div class="a" style="left:698.7px;top:604.4px;width:319.29999999999995px;height:19.600000000000023px;background:#fcfde8;border:1px solid #f1ecc8;border-top-color:#efc6a0;border-bottom-color:#efc6a0;border-radius:2px"></div>
<div class="t" style="right:821px;top:609.35px;font-size:8.3px;color:#666;">*提货地:</div>
<div class="t" style="right:386px;top:609.35px;font-size:8.3px;color:#666;">*送货地:</div>
<div class="t" style="left:272px;top:611.85px;font-size:8.3px;color:#444;">江苏省南京市</div>
<div class="t" style="left:706px;top:611.85px;font-size:8.3px;color:#444;">苏州仓库</div>
<div class="a" style="left:1033px;top:606px;width:28px;height:10px;background:#fff;border:1px solid #eee"></div>
<div class="a" style="left:135px;top:611px;width:945px;height:1px;background:#d6d6d6"></div>
</body></html>
